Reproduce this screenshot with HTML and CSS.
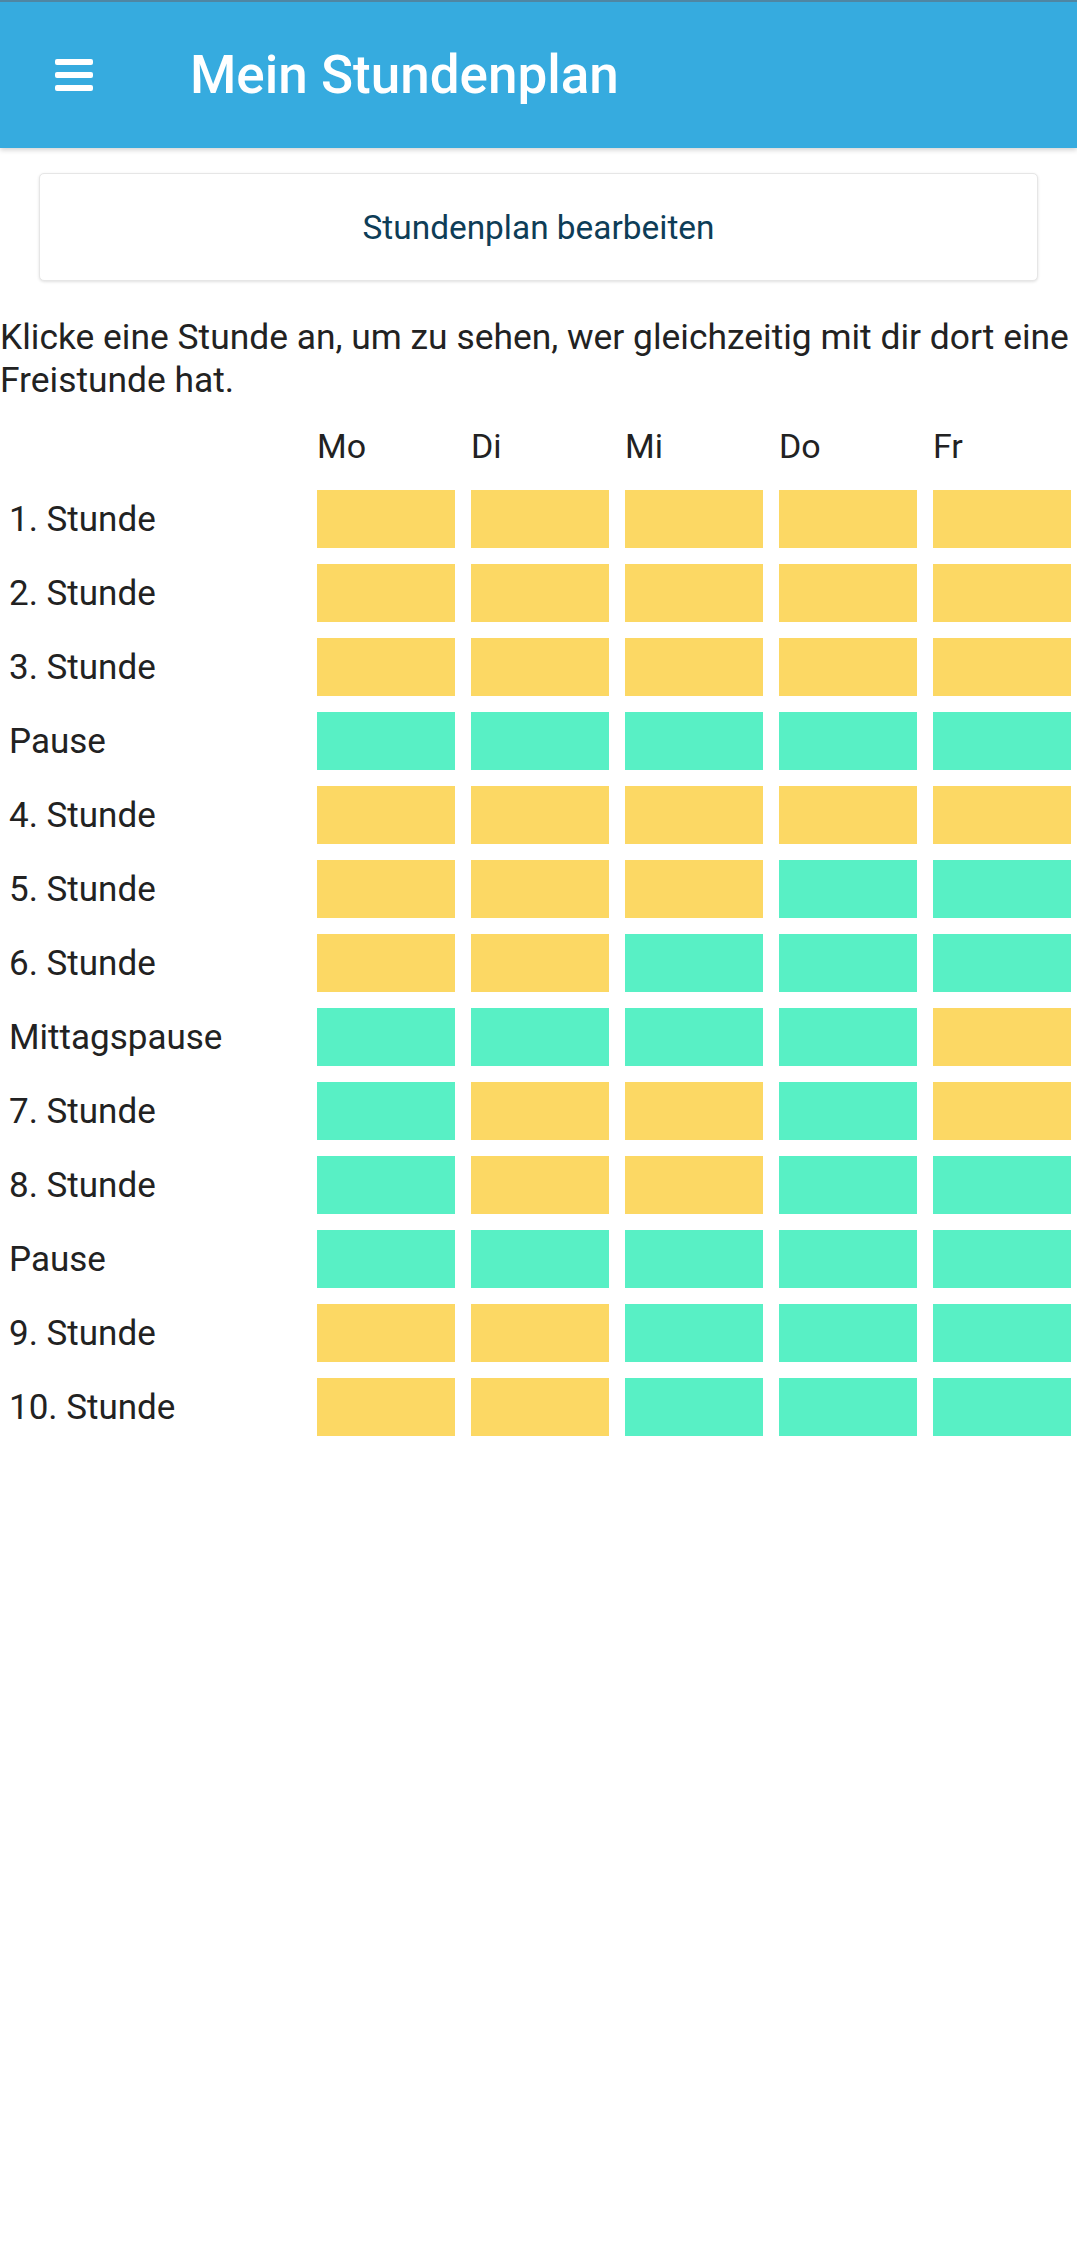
FILE: index.html
```html
<!DOCTYPE html>
<html lang="de">
<head>
    <meta charset="UTF-8">
    <meta name="viewport" content="width=device-width, initial-scale=1.0">
    <title>Mein Stundenplan</title>
    <link rel="stylesheet" href="styles.css">
</head>
<body>
    <header class="app-bar">
        <button class="menu-btn" aria-label="Menü">
            <span></span>
            <span></span>
            <span></span>
        </button>
        <h1>Mein Stundenplan</h1>
    </header>
    <main>
        <button class="edit-btn" id="edit-btn">Stundenplan bearbeiten</button>
        <p class="hint">Klicke eine Stunde an, um zu sehen, wer gleichzeitig mit dir dort eine Freistunde hat.</p>
        <div class="timetable" id="timetable">
            <div class="day-label"></div>
            <div class="day-label">Mo</div>
            <div class="day-label">Di</div>
            <div class="day-label">Mi</div>
            <div class="day-label">Do</div>
            <div class="day-label">Fr</div>
        </div>
    </main>
    <script>
        document.addEventListener('DOMContentLoaded', function () {
            // f = Freistunde / Pause, b = Unterricht
            const rows = [
                ['1. Stunde', 'bbbbb'],
                ['2. Stunde', 'bbbbb'],
                ['3. Stunde', 'bbbbb'],
                ['Pause', 'fffff'],
                ['4. Stunde', 'bbbbb'],
                ['5. Stunde', 'bbbff'],
                ['6. Stunde', 'bbfff'],
                ['Mittagspause', 'ffffb'],
                ['7. Stunde', 'fbbfb'],
                ['8. Stunde', 'fbbff'],
                ['Pause', 'fffff'],
                ['9. Stunde', 'bbfff'],
                ['10. Stunde', 'bbfff']
            ];

            const table = document.getElementById('timetable');

            rows.forEach(([name, slots]) => {
                const label = document.createElement('div');
                label.className = 'period-label';
                label.textContent = name;
                table.appendChild(label);

                slots.split('').forEach(slot => {
                    const cell = document.createElement('div');
                    cell.className = slot === 'f' ? 'slot slot-free' : 'slot slot-busy';
                    table.appendChild(cell);
                });
            });
        });
    </script>
</body>
</html>
```

FILE: styles.css
```css
body {
    font-family: Roboto, "Noto Sans", Arial, sans-serif;
    background-color: #fff;
    margin: 0;
    padding: 0;
    color: #222;
}

.app-bar {
    display: flex;
    align-items: center;
    height: 146px;
    background-color: #36abdf;
    border-top: 2px solid #4f86a3;
    box-shadow: 0 2px 5px rgba(0, 0, 0, 0.18);
    color: white;
}

.menu-btn {
    display: flex;
    flex-direction: column;
    gap: 7px;
    width: 38px;
    margin: 0 0 0 55px;
    padding: 0;
    background: none;
    border: none;
    cursor: pointer;
}

.menu-btn span {
    display: block;
    height: 6px;
    background-color: white;
    border-radius: 2px;
}

.app-bar h1 {
    margin: 0 0 0 97px;
    font-size: 53px;
    font-weight: 500;
}

main {
    padding: 25px 0 0;
}

.edit-btn {
    display: block;
    width: calc(100% - 78px);
    height: 108px;
    margin: 0 39px;
    background-color: white;
    border: 1px solid #e6e6e6;
    border-radius: 5px;
    box-shadow: 0 1px 3px rgba(0, 0, 0, 0.12);
    font-family: inherit;
    font-size: 33.4px;
    color: #0e3d57;
    cursor: pointer;
}

.hint {
    margin: 35px 0 0;
    font-size: 35.4px;
    line-height: 43px;
}

.timetable {
    display: grid;
    grid-template-columns: 295px repeat(5, 1fr);
    grid-template-rows: 48px;
    grid-auto-rows: 58px;
    gap: 16px;
    margin-top: 24px;
    padding: 0 6px;
}

.day-label {
    font-size: 34px;
    line-height: 40px;
}

.period-label {
    display: flex;
    align-items: center;
    padding-left: 3px;
    font-size: 35px;
}

.slot {
    cursor: pointer;
}

.slot-busy {
    background-color: #fcd864;
}

.slot-free {
    background-color: #58f0c5;
}
```
